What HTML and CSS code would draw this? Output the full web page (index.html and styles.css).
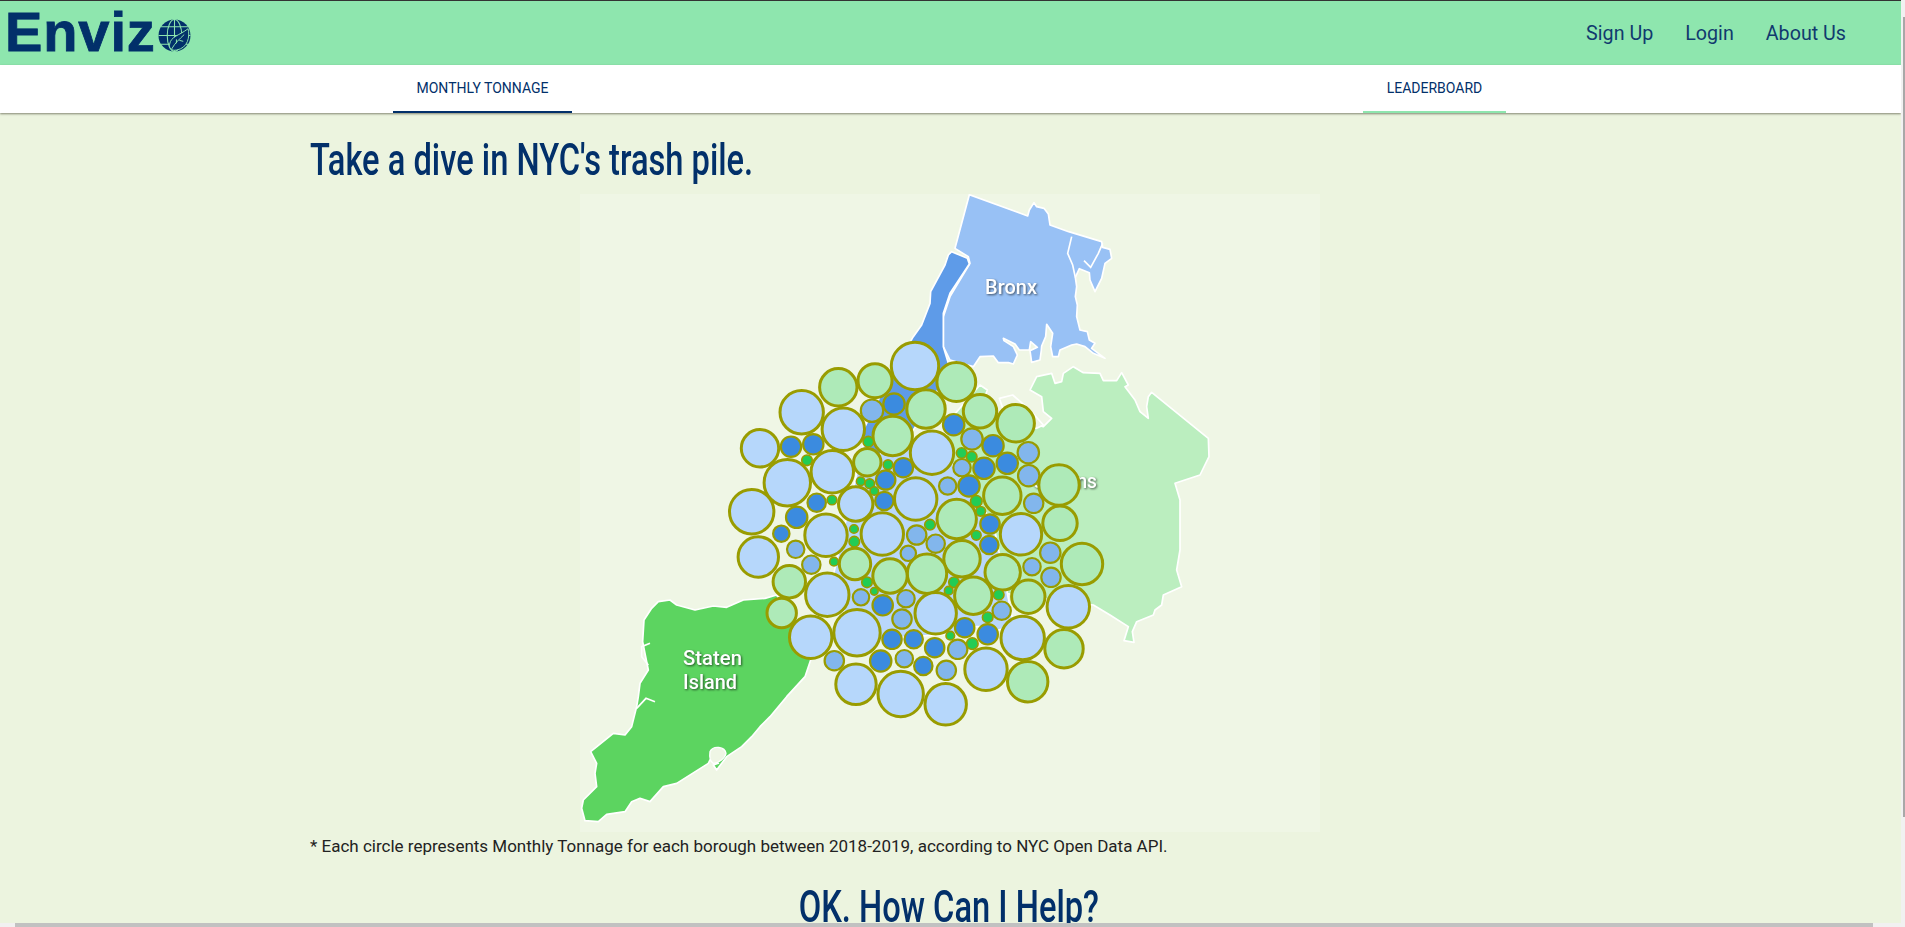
FILE: index.html
```html
<!DOCTYPE html>
<html lang="en">
<head>
<meta charset="utf-8">
<title>Enviz</title>
<link rel="stylesheet" href="styles.css">
</head>
<body>
<div class="page">
  <header class="topbar">
    <a class="logo">
      <span class="logo-text">Enviz</span>
      <svg class="globe" viewBox="0 0 34 34" aria-hidden="true">
        <circle class="globe-ball" cx="17" cy="17" r="16.5"/>
        <g class="globe-lines">
          <ellipse cx="17" cy="17" rx="7.5" ry="16.5"/>
          <path d="M17 .5V33.5M3 8H31M.5 17H33.5M3 26H31"/>
        </g>
        <path class="leaf" d="M31 10C33 18 31 30 19 32C14 33 11 30 12 26C13 18 22 17 31 10Z"/>
        <path class="leaf-vein" d="M14 31C18 24 22 21 27 16M19 25L19 21M22 22L26 23"/>
      </svg>
    </a>
    <nav class="topnav">
      <a>Sign Up</a>
      <a>Login</a>
      <a>About Us</a>
    </nav>
  </header>
  <div class="tabs">
    <a class="tab tab-active">MONTHLY TONNAGE</a>
    <a class="tab tab-other">LEADERBOARD</a>
  </div>
  <main class="content">
    <h1 class="title">Take a dive in NYC's trash pile.</h1>
    <svg class="map" viewBox="580 194 740 638" role="img" aria-label="Map of New York City boroughs with bubbles">
      <g transform="translate(880 190) scale(.33333)">
        <path class="boro queens" d="M300,585L322,600L300,660L450,700L490,710L515,685L490,665L485,620L450,600L470,560L515,550L525,580L545,575L550,550L580,530L610,548L660,550L670,572L710,572L725,548L745,585L735,590L765,630L780,665L805,685L800,650L805,620L815,607L985,745L987,800L960,855L885,880L900,930L900,1080L890,1140L905,1190L850,1215L845,1245L825,1260L820,1275L770,1295L757,1325L762,1357L732,1352L745,1310L690,1275L640,1245L300,1200L200,1000L200,700Z"/>
        <path class="boro queens-cut" d="M358,625L398,615L450,660L490,705L470,715L380,690Z"/>
        <path class="boro brooklyn" d="M-40,720L200,800L340,1000L400,1300L388,1310L327,1330L300,1310L268,1310L240,1330L-50,1350L-150,1200Z"/>
        <path class="boro bronx" d="M268,14L443,78L448,60L462,38L470,50L492,55L505,72L510,105L566,125L665,155L668,172L690,178L695,205L675,220L665,265L645,305L630,270L628,248L598,236L586,262L590,290L586,320L592,345L590,380L600,420L622,425L628,450L645,460L635,475L675,505L640,490L615,470L590,462L575,465L540,480L535,500L518,500L512,470L518,430L500,403L497,440L485,468L484,480L480,510L455,517L450,482L472,472L452,455L448,480L418,480L405,462L370,445L372,452L400,470L412,495L400,522L385,518L355,518L340,498L300,500L280,530L210,510L190,470L190,380L210,320L270,220L265,200L225,175Z"/>
        <path class="inlet" d="M575,140L563,190L578,225L586,262M612,212L632,232L655,190L668,160"/>
        <path class="boro manhattan" d="M215,185L262,205L268,222L210,310L190,370L190,470L205,520L165,620L100,720L-10,800L-60,740L30,560L100,440L125,405L150,340L152,305L195,225L205,195Z"/>
      </g>
      <g transform="translate(570 480) scale(.33333)">
        <path class="boro staten" d="M265,365L300,360L320,375L375,390L430,378L470,382L520,360L585,355L620,345L680,450L722,540L705,590L650,650L600,710L570,740L545,770L515,800L470,830L440,870L430,855L445,850L420,840L415,850L320,910L280,920L240,965L210,955L185,965L165,995L110,1003L85,1025L45,1022L35,985L40,960L80,920L75,880L80,850L62,815L130,760L165,765L185,740L200,680L205,650L210,610L235,570L225,520L218,485L222,420L245,385Z"/>
        <path class="pond" d="M420,815C430,795 465,800 468,820C465,835 445,850 430,850C420,845 418,830 420,815Z"/>
        <path class="inlet" d="M240,490L215,500L215,530L235,555M200,685L228,655L255,665"/>
      </g>
      <text class="label" x="985" y="294" textLength="52" lengthAdjust="spacingAndGlyphs">Bronx</text>
      <text class="label" x="1032" y="488" textLength="65" lengthAdjust="spacingAndGlyphs">Queens</text>
      <text class="label" x="683" y="665" textLength="59" lengthAdjust="spacingAndGlyphs">Staten</text>
      <text class="label" x="683" y="689" textLength="54" lengthAdjust="spacingAndGlyphs">Island</text>
      <g class="bubbles">
        <circle class="l" cx="915" cy="366" r="23.7"/><circle class="g" cx="956.3" cy="382" r="19.4"/><circle class="g" cx="875" cy="380.7" r="17"/><circle class="g" cx="838.3" cy="387.3" r="18.7"/>
        <circle class="l" cx="801.7" cy="412.3" r="21.7"/><circle class="m" cx="872" cy="410.7" r="11.2"/><circle class="b" cx="894" cy="404" r="10.7"/><circle class="g" cx="926" cy="409" r="19.2"/>
        <circle class="g" cx="980" cy="411.3" r="16.7"/><circle class="g" cx="1015.7" cy="423.3" r="18.7"/><circle class="l" cx="843.3" cy="429.3" r="21.2"/><circle class="g" cx="892.7" cy="436" r="19.7"/>
        <circle class="b" cx="953.7" cy="424.7" r="10.7"/><circle class="l" cx="932" cy="452.7" r="21.7"/><circle class="m" cx="972" cy="439" r="10.7"/><circle class="b" cx="993" cy="445.7" r="10.7"/>
        <circle class="l" cx="760" cy="448.3" r="18.7"/><circle class="b" cx="791" cy="446.7" r="10.2"/><circle class="b" cx="813.3" cy="444.3" r="10.2"/><circle class="s" cx="868.3" cy="441.7" r="5.3"/>
        <circle class="s" cx="807" cy="460.3" r="5.3"/><circle class="l" cx="787.3" cy="482.7" r="23.2"/><circle class="l" cx="832.3" cy="471.7" r="21.2"/><circle class="g" cx="867.3" cy="462.3" r="13.7"/>
        <circle class="m" cx="1028.3" cy="452.7" r="10.7"/><circle class="b" cx="1007.3" cy="463.3" r="10.7"/><circle class="s" cx="961.7" cy="453" r="5.3"/><circle class="s" cx="971.7" cy="456.7" r="5.3"/>
        <circle class="m" cx="962" cy="467.7" r="8.7"/><circle class="b" cx="984" cy="468.3" r="10.7"/><circle class="m" cx="1028.7" cy="475.7" r="10.7"/><circle class="s" cx="888" cy="464.7" r="4.8"/>
        <circle class="b" cx="903.3" cy="467.7" r="9.7"/><circle class="b" cx="885.7" cy="480" r="9.7"/><circle class="s" cx="860.7" cy="481.3" r="4.3"/><circle class="s" cx="869.7" cy="483.7" r="4.8"/>
        <circle class="g" cx="1059" cy="485" r="20.2"/><circle class="l" cx="751.7" cy="511.7" r="22.2"/><circle class="l" cx="915.7" cy="499" r="21.2"/><circle class="m" cx="947.7" cy="486" r="8.7"/>
        <circle class="b" cx="969" cy="486" r="10.7"/><circle class="g" cx="1002.3" cy="495.7" r="18.7"/><circle class="m" cx="1033.7" cy="503.3" r="9.7"/><circle class="l" cx="855.7" cy="504" r="17.2"/>
        <circle class="b" cx="816.7" cy="502.7" r="9.2"/><circle class="s" cx="832" cy="500" r="4.8"/><circle class="b" cx="884.3" cy="501" r="9.2"/><circle class="s" cx="874.3" cy="491" r="4.3"/>
        <circle class="b" cx="796.7" cy="517.3" r="10.7"/><circle class="l" cx="826" cy="535.3" r="21.2"/><circle class="l" cx="882.3" cy="534" r="21.2"/><circle class="g" cx="956.7" cy="519" r="19.7"/>
        <circle class="s" cx="976.3" cy="501.3" r="5.8"/><circle class="s" cx="980.7" cy="511.3" r="4.8"/><circle class="b" cx="990" cy="524" r="9.7"/><circle class="s" cx="930" cy="524.7" r="5.3"/>
        <circle class="m" cx="916.7" cy="535" r="9.7"/><circle class="m" cx="935.7" cy="543.7" r="9.2"/><circle class="l" cx="1021" cy="534.3" r="20.7"/><circle class="s" cx="976.3" cy="535.3" r="4.8"/>
        <circle class="b" cx="989.3" cy="545" r="9.2"/><circle class="b" cx="781.3" cy="533.7" r="8.2"/><circle class="s" cx="854" cy="529" r="4.3"/><circle class="s" cx="854.3" cy="541.7" r="5.3"/>
        <circle class="m" cx="795.7" cy="549.3" r="8.7"/><circle class="l" cx="758.3" cy="557" r="20.2"/><circle class="m" cx="811.3" cy="564.7" r="9.2"/><circle class="s" cx="834" cy="561.7" r="4.3"/>
        <circle class="g" cx="855" cy="564" r="15.7"/><circle class="m" cx="908.3" cy="553.3" r="7.7"/><circle class="g" cx="962" cy="558.7" r="18.2"/><circle class="g" cx="927" cy="573.7" r="19.7"/>
        <circle class="g" cx="890" cy="576" r="17.2"/><circle class="g" cx="1002.7" cy="572.3" r="17.7"/><circle class="m" cx="1032" cy="566.7" r="8.7"/><circle class="m" cx="1050.3" cy="552.7" r="10.2"/>
        <circle class="m" cx="1051" cy="577.3" r="9.7"/><circle class="g" cx="1082" cy="564" r="20.7"/><circle class="g" cx="1060" cy="523.3" r="17.2"/><circle class="g" cx="789.3" cy="581.7" r="16.2"/>
        <circle class="l" cx="827.3" cy="594.7" r="21.7"/><circle class="s" cx="867" cy="582.3" r="5.3"/><circle class="s" cx="874.3" cy="591.3" r="3.8"/><circle class="m" cx="861" cy="597.3" r="8.2"/>
        <circle class="b" cx="882.7" cy="605.3" r="10.2"/><circle class="m" cx="906" cy="598.7" r="8.7"/><circle class="l" cx="935.7" cy="613.3" r="20.7"/><circle class="s" cx="954" cy="582.3" r="5.3"/>
        <circle class="s" cx="948.7" cy="590.7" r="4.3"/><circle class="g" cx="973.3" cy="595.7" r="18.7"/><circle class="s" cx="998.7" cy="594.7" r="5.3"/><circle class="g" cx="1028.3" cy="596.7" r="16.7"/>
        <circle class="m" cx="1001.7" cy="610.7" r="9.2"/><circle class="l" cx="1068.3" cy="606.7" r="21.2"/><circle class="l" cx="1022.7" cy="638" r="21.7"/><circle class="g" cx="1064" cy="648.7" r="19.2"/>
        <circle class="g" cx="1027.7" cy="681.7" r="20.2"/><circle class="l" cx="986" cy="669.3" r="21.2"/><circle class="g" cx="781.7" cy="613" r="14.7"/><circle class="l" cx="810.7" cy="637.3" r="21.2"/>
        <circle class="l" cx="857" cy="632.7" r="23.2"/><circle class="m" cx="902" cy="619" r="9.7"/><circle class="b" cx="892" cy="639.3" r="9.7"/><circle class="b" cx="913.7" cy="639.3" r="9.2"/>
        <circle class="b" cx="934.7" cy="647.7" r="9.7"/><circle class="b" cx="964.7" cy="627.7" r="9.7"/><circle class="s" cx="987.7" cy="617.3" r="5.3"/><circle class="b" cx="987.7" cy="634.3" r="10.2"/>
        <circle class="s" cx="950.3" cy="635.7" r="4.3"/><circle class="s" cx="972.3" cy="643.7" r="5.8"/><circle class="m" cx="957.7" cy="649.3" r="9.7"/><circle class="m" cx="834.3" cy="660.7" r="9.7"/>
        <circle class="b" cx="880.7" cy="661" r="10.7"/><circle class="m" cx="904.3" cy="658.7" r="8.7"/><circle class="b" cx="923.3" cy="666" r="9.2"/><circle class="m" cx="946.3" cy="670.3" r="9.7"/>
        <circle class="l" cx="856" cy="684.3" r="20.2"/><circle class="l" cx="900.7" cy="694" r="22.7"/><circle class="l" cx="945.7" cy="704.3" r="20.7"/>
      </g>
    </svg>
    <p class="note">* Each circle represents Monthly Tonnage for each borough between 2018-2019, according to NYC Open Data API.</p>
    <div class="help"><h2 class="help-title">OK. How Can I Help?</h2></div>
  </main>
  <div class="vscroll"><span class="vthumb"></span></div>
  <div class="hscroll"><span class="harrow"></span><span class="hthumb"></span><span class="harrow"></span></div>
</div>
</body>
</html>
```
FILE: styles.css
```css
* { box-sizing: border-box; }
html, body { margin: 0; height: 100%; overflow: hidden; }
body { background: #ecf4df; font-family: Roboto, "Liberation Sans", sans-serif; color: #222; }
.page { position: relative; width: 1905px; height: 927px; overflow: hidden; padding-right: 4px; }

.topbar { height: 65px; background: #8ee6ae; border-top: 1px solid #333; display: flex; justify-content: space-between; align-items: center; padding-right: 55px; }
.logo { width: 197px; height: 64px; display: flex; align-items: center; padding: 0 0 0 5px; gap: 2px; }
.logo-text { font-family: "Liberation Sans", Arial, sans-serif; font-weight: 700; font-size: 56px; line-height: 64px; color: #02306a; margin-top: -3px; letter-spacing: .9px; -webkit-text-stroke: .8px #02306a; }
.globe { width: 33px; height: 33px; flex: none; margin-top: 4px; }
.globe-ball { fill: #02306a; }
.globe-lines { fill: none; stroke: #8ee6ae; stroke-width: 1.1; }
.leaf { fill: #02306a; stroke: #8ee6ae; stroke-width: 1; }
.leaf-vein { fill: none; stroke: #8ee6ae; stroke-width: 1; }
.topnav { display: flex; gap: 32px; font-size: 19.7px; color: #113a6e; }

.tabs { height: 48px; background: #fff; display: flex; padding-left: 393px; gap: 791px; box-shadow: 0 1px 2px rgba(60,60,40,.6); position: relative; }
.tab { height: 48px; display: flex; align-items: center; justify-content: center; font-size: 14px; color: #02306a; border-bottom: 2px solid; }
.tab-active { width: 179px; border-color: #02306a; }
.tab-other { width: 143px; border-color: #8ee6ae; }

.content { padding-left: 310px; }
.title { margin: 19px 0 0; height: 62px; font-family: Roboto, sans-serif; font-weight: 500; font-size: 45px; line-height: 55px; color: #02306a; white-space: nowrap; transform: scaleX(.726); transform-origin: left center; }
.map { display: block; margin-left: 270px; width: 740px; height: 638px; background: #eff6e5; }
.boro { stroke: #fff; stroke-width: 5; stroke-linejoin: round; }
.bronx { fill: #98c1f5; }
.manhattan { fill: #5e9be8; }
.queens { fill: #bbeebf; }
.queens-cut { fill: #eff6e5; }
.brooklyn { fill: #b9d7fb; }
.staten { fill: #5cd460; }
.pond { fill: #eff6e5; stroke: #fff; stroke-width: 4; }
.inlet { fill: none; stroke: #fff; stroke-width: 5; }
.label { font-family: Roboto, sans-serif; font-weight: 500; font-size: 21px; fill: #fff; filter: drop-shadow(1px 1px 1.2px rgba(0,0,0,.6)); }
.bubbles circle { stroke: #999c00; }
.bubbles .l { fill: #b6d7fb; stroke-width: 3; }
.bubbles .g { fill: #aeeab8; stroke-width: 3; }
.bubbles .m { fill: #82b6ec; stroke-width: 2.2; }
.bubbles .b { fill: #3b8bdf; stroke-width: 2.2; }
.bubbles .s { fill: #22cc55; stroke-width: 1.6; }
.note { margin: 5px 0 0; font-size: 17px; line-height: 19px; color: #222; white-space: nowrap; }
.help { width: 1278px; margin-top: 23px; text-align: center; }
.help-title { margin: 0; display: inline-block; font-family: Roboto, sans-serif; font-weight: 500; font-size: 45px; line-height: 55px; color: #02306a; white-space: nowrap; transform: scaleX(.726); }

.vscroll { position: absolute; top: 0; right: 0; width: 4px; height: 927px; background: #f1f1f1; padding: 17px 0 0 2px; }
.vthumb { display: block; width: 2px; height: 800px; background: #a8a8a8; }
.hscroll { position: absolute; left: 0; right: 0; bottom: 0; height: 4px; background: #f1f1f1; display: flex; }
.hthumb { width: 1858px; background: #c1c1c1; }
.harrow { width: 15px; flex: none; }
.harrow:last-child { width: 32px; }
```
